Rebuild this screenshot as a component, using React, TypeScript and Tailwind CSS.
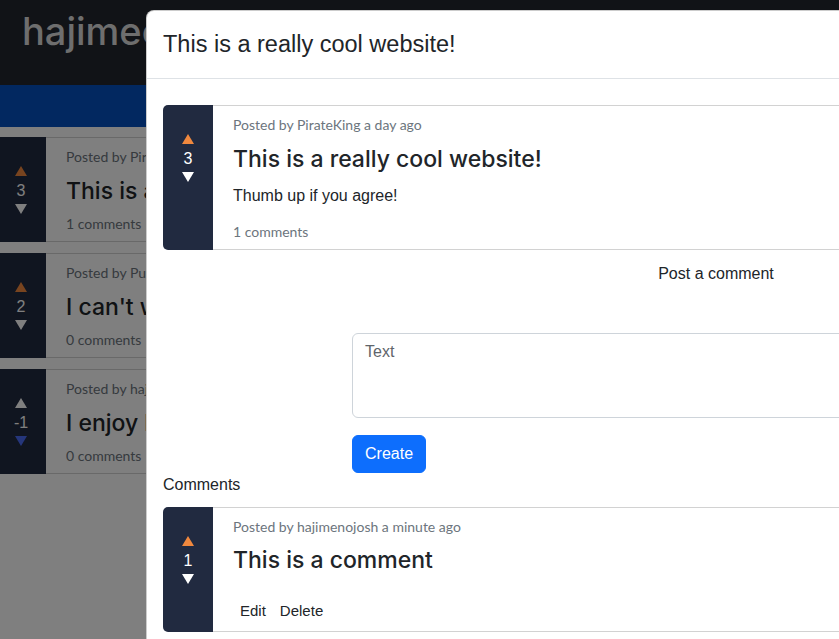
import React from "react";

function Up({ color }: { color: string }) {
  return (
    <svg width="12" height="10" viewBox="0 0 12 10" className="block">
      <polygon points="6,0 12,10 0,10" fill={color} />
    </svg>
  );
}
function Down({ color }: { color: string }) {
  return (
    <svg width="12" height="10" viewBox="0 0 12 10" className="block">
      <polygon points="0,0 12,0 6,10" fill={color} />
    </svg>
  );
}

function VoteCol({ count, up, down }: { count: string; up: string; down: string }) {
  return (
    <div className="w-[50px] shrink-0 bg-[#212a40] rounded-l-[5px] flex flex-col items-center pt-[29px]">
      <Up color={up} />
      <div className="mt-[6px] text-[16px] leading-[18px] text-white font-['Liberation_Sans',Arial,sans-serif]">{count}</div>
      <div className="mt-[4px]">
        <Down color={down} />
      </div>
    </div>
  );
}

const lato = "font-['Lato','Liberation_Sans',sans-serif]";
const sans = "font-['Liberation_Sans',Arial,sans-serif]";
const titleFont = "font-['Inter','Liberation_Sans',sans-serif] font-medium";

function BgCard({ count, up, down, author, title, comments }: { count: string; up: string; down: string; author: string; title: string; comments: string }) {
  return (
    <div className="flex -ml-[4px] w-[900px]">
      <VoteCol count={count} up={up} down={down} />
      <div className="flex-1 bg-white border-y border-[#d2d2d2] pl-[20px] pb-[7px] whitespace-nowrap">
        <div className={`pt-[8px] text-[14px] leading-[21px] text-[#6c757d] ${lato}`}>{author}</div>
        <div className={`mt-[10px] text-[23px] leading-[29px] text-[#212529] ${titleFont}`}>{title}</div>
        <div className={`mt-[7px] text-[14px] leading-[21px] text-[#6c757d] ${lato}`}>{comments}</div>
      </div>
    </div>
  );
}

export default function App() {
  return (
    <div className={`relative w-[839px] h-[639px] overflow-hidden bg-white ${sans}`}>
      {/* background page */}
      <div>
        <nav className="h-[85px] bg-[#23262f] flex items-start pt-[12px] px-[22px]">
          <span className="text-[38px] leading-[38px] text-[#dcdcdc] font-['Inter',sans-serif] font-medium">hajimecode</span>
        </nav>
        <div className="h-[42px] bg-[#0450c0]" />
        <div className="pt-[10px] flex flex-col gap-[11px]">
          <BgCard count="3" up="#f0883e" down="#ffffff" author="Posted by PirateKing a day ago" title="This is a really cool website!" comments="1 comments" />
          <BgCard count="2" up="#f0883e" down="#ffffff" author="Posted by PussInBoots 2 days ago" title="I can't wait for this!" comments="0 comments" />
          <BgCard count="-1" up="#ffffff" down="#4a6cf7" author="Posted by hajimenojosh 3 days ago" title="I enjoy long walks" comments="0 comments" />
        </div>
      </div>

      {/* backdrop */}
      <div className="absolute inset-0 bg-black/50" />

      {/* modal */}
      <div className="absolute left-[146px] top-[10px] w-[1140px] bg-white rounded-[8px] border border-black/20">
        <div className="px-[16px] pt-[15px] pb-[16px] border-b border-[#dee2e6]">
          <h4 className="text-[23.5px] leading-[36px] text-[#212529]">This is a really cool website!</h4>
        </div>
        <div className="p-[16px]">
          <div className="mt-[10px] flex">
            <VoteCol count="3" up="#f0883e" down="#ffffff" />
            <div className="flex-1 border-y border-r border-[#d2d2d2] pl-[20px] pb-[7px]">
              <div className={`pt-[8px] text-[14px] leading-[21px] text-[#6c757d] ${lato}`}>Posted by PirateKing a day ago</div>
              <div className={`mt-[10px] text-[23px] leading-[29px] text-[#212529] ${titleFont}`}>This is a really cool website!</div>
              <div className="mt-[10px] text-[16px] leading-[24px] text-[#212529]">Thumb up if you agree!</div>
              <div className={`mt-[13px] text-[14px] leading-[21px] text-[#6c757d] ${lato}`}>1 comments</div>
            </div>
          </div>

          <div className="mt-[12px] text-center text-[16px] leading-[24px] text-[#212529]">Post a comment</div>

          <div className="ml-[189px] w-[728px] mt-[47px]">
            <textarea
              placeholder="Text"
              className="block w-full h-[85px] border border-[#ced4da] rounded-[6px] px-[12px] py-[6px] text-[16px] leading-[24px] text-[#212529] placeholder-[#5f656b] resize-none outline-none"
            />
            <button className="mt-[17px] h-[38px] px-[12px] bg-[#0d6efd] border border-[#0d6efd] rounded-[6px] text-white text-[16px] leading-[24px]">
              Create
            </button>
          </div>

          <div className="text-[16px] leading-[24px] text-[#212529]">Comments</div>

          <div className="mt-[10px] flex">
            <VoteCol count="1" up="#f0883e" down="#ffffff" />
            <div className="flex-1 border-y border-r border-[#d2d2d2] pl-[20px] pb-[10px]">
              <div className={`pt-[8px] text-[14px] leading-[21px] text-[#6c757d] ${lato}`}>Posted by hajimenojosh a minute ago</div>
              <div className={`mt-[9px] text-[23px] leading-[29px] text-[#212529] ${titleFont}`}>This is a comment</div>
              <div className="mt-[25px] flex text-[15px] leading-[21px] text-[#212529]">
                <button className="px-[7px]">Edit</button>
                <button className="px-[7px]">Delete</button>
              </div>
            </div>
          </div>
        </div>
      </div>
    </div>
  );
}
